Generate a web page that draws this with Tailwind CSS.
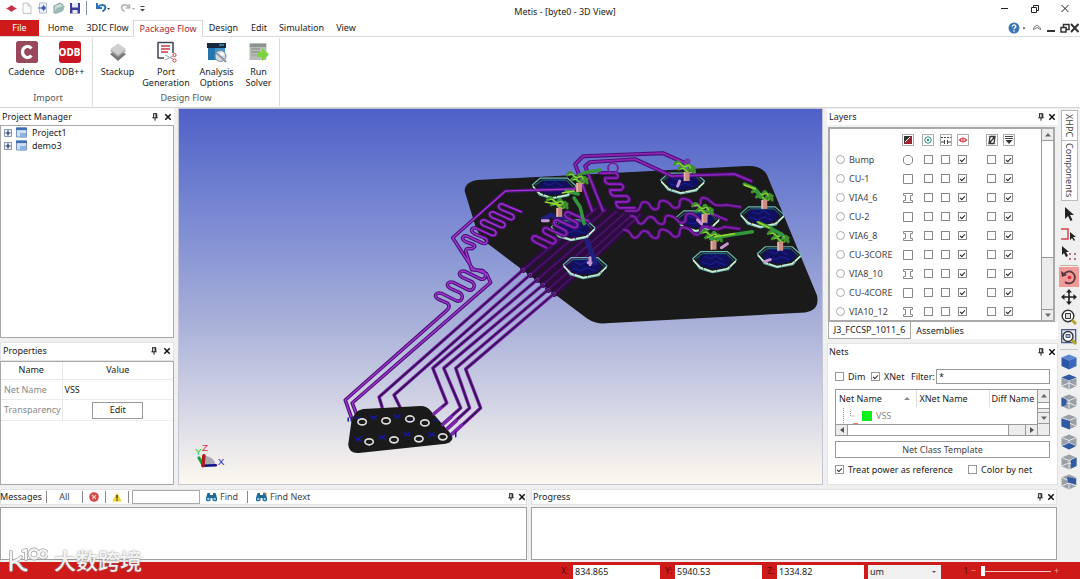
<!DOCTYPE html>
<html lang="en">
  <head>
    <meta charset="UTF-8" />
    <meta name="viewport" content="width=device-width, initial-scale=1.0" />
    <title>Metis - [byte0 - 3D View]</title>
    <script src="https://cdn.jsdelivr.net/npm/@tailwindcss/browser@4"></script>
  </head>
  <body
    class="relative flex min-h-screen flex-col overflow-hidden bg-[#f0f0f0] font-['Noto_Sans','Noto_Sans_CJK_SC',sans-serif] text-[9px] leading-3 text-[#222]"
  >
    <!-- shared icons -->
    <svg class="hidden">
      <symbol id="pin" viewBox="0 0 8 9">
        <path d="M2 .8h4v4.4M2.5.8v4.4M1 5.4h6M4 5.4v3.2M5.2 1v4" fill="none" stroke="#111" stroke-width="1.1" />
      </symbol>
      <symbol id="close" viewBox="0 0 8 8">
        <path d="M1.3 1.3l5.4 5.4M6.7 1.3L1.3 6.7" stroke="#111" stroke-width="1.5" />
      </symbol>
      <symbol id="project" viewBox="0 0 12 12">
        <path d="M.5 1h10v9H.5z" fill="#cfe0f4" stroke="#7b95b8" />
        <path d="M0 .5h11v2.6H0z" fill="#3f6fae" />
        <path d="M4 6h6v4.6H4z" fill="#8db5e4" />
      </symbol>
      <symbol id="plus" viewBox="0 0 8 8">
        <path d="M.5.5h7v7h-7z" fill="#eef2fa" stroke="#8594b0" />
        <path d="M1.5 4h5M4 1.5v5" stroke="#1c2c66" stroke-width="1.2" />
      </symbol>
      <symbol id="binoculars" viewBox="0 0 11 10">
        <path d="M1.5 1h2.5v2h3V1h2.5L11 6v2.5L9 9.5 6.5 8.5V6h-2v2.5L2 9.5 0 8.5V6z" fill="#1c6a96" />
        <circle cx="2.3" cy="7" r="1.2" fill="#9fd0ea" />
        <circle cx="8.7" cy="7" r="1.2" fill="#9fd0ea" />
      </symbol>
      <symbol id="arrow" viewBox="0 0 16 16">
        <path d="M4 1v12l3-3 2.5 5 2-1-2.5-5h4z" fill="#222" />
      </symbol>
      <symbol id="cube" viewBox="0 0 16 16">
        <path d="M8 .5l7.5 3v8.5L8 15.5.5 12V3.5z" fill="#9aa0a8" />
        <path d="M.5 3.5L8 6.5l7.5-3M8 6.5v9M.5 12L8 9l7.5 3" fill="none" stroke="#e6e8ec" />
      </symbol>
    </svg>

    <!-- title bar -->
    <header class="relative flex h-5 items-start justify-between bg-white">
      <div class="flex items-center gap-1 pt-px pl-1.5">
        <svg class="size-[11px]" viewBox="0 0 11 11"><path d="M0 5.5l3-1.5 2.5-2L8 4l3 1.5L8 7 5.5 9 3 7z" fill="#c8324a" /></svg>
        <button aria-label="New"><svg class="size-3" viewBox="0 0 12 12"><path d="M2 1h5l3 3v7.5H2zM7 1v3h3" fill="#fafafa" stroke="#c4c4c4" /></svg></button>
        <button aria-label="Import"><svg class="size-3" viewBox="0 0 12 12"><path d="M2.5 1h7v10h-7z" fill="#eef1fa" stroke="#b4bcd0" /><path d="M6.5 3L9 6 6.5 9 4.5 6z" fill="#3458b4" /><path d="M1 6h5" stroke="#3458b4" /></svg></button>
        <button aria-label="Open"><svg class="size-3" viewBox="0 0 12 12"><path d="M1 4l6-3 3 2v5l-6 3H1z" fill="#c9ddd8" stroke="#7c9a98" /><path d="M1 11l3-5 8-2-3 6z" fill="#98b9b5" /></svg></button>
        <button aria-label="Save"><svg class="size-3" viewBox="0 0 12 12"><path d="M1 1h10v10.5H1z" fill="#3d3f9c" /><path d="M3 1h6v4.5H3zM3.5 8h5v3.5h-5z" fill="#e9e9f8" /></svg></button>
        <span class="mr-1 ml-px h-3.5 w-px bg-[#8896a8]"></span>
        <button aria-label="Undo"><svg class="h-3 w-[15px]" viewBox="0 0 15 12"><path d="M2 1v5h5" fill="none" stroke="#2b72bd" stroke-width="2" /><path d="M2.5 5.500C5 2 10 2 10.500 5.500c0 2-1.500 3-3 4" fill="none" stroke="#2b72bd" stroke-width="2" /><path d="M12 6h3l-1.500 2z" fill="#444" /></svg></button>
        <span class="w-0.5"></span>
        <button aria-label="Redo"><svg class="h-3 w-[15px]" viewBox="0 0 15 12"><path d="M9.500 2v4h-4M9 5.500C7 2 2 2 1.500 5.500c0 2 1.500 3 3 4" fill="none" stroke="#b5b5b5" stroke-width="1.600" /><path d="M12 6h3l-1.500 2z" fill="#aaa" /></svg></button>
        <svg class="h-2 w-[7px]" viewBox="0 0 7 8"><path d="M1.500 2.500h4" stroke="#444" /><path d="M1 5h5L3.500 7.500z" fill="#444" /></svg>
      </div>
      <h1 class="absolute inset-x-0 top-1.5 mr-[-50px] text-center">Metis - [byte0 - 3D View]</h1>
      <div class="relative flex gap-5 pt-1 pr-2.5">
        <button aria-label="Minimize"><svg class="size-2.5" viewBox="0 0 10 10"><path d="M1 4.500h7" stroke="#222" /></svg></button>
        <button aria-label="Restore"><svg class="size-2.5" viewBox="0 0 10 10"><path d="M1.500 3.500h5v5h-5zM3.500 3.500v-2h5v5h-2" fill="none" stroke="#222" /></svg></button>
        <button aria-label="Close"><svg class="size-2.5" viewBox="0 0 10 10"><path d="M1.500 1l7 7M8.500 1l-7 7" stroke="#222" /></svg></button>
      </div>
    </header>

    <!-- ribbon tabs -->
    <nav class="flex h-[17px] items-stretch border-b border-[#d9d9d9] bg-white">
      <a href="#" class="flex w-[39px] items-center justify-center bg-[#cf1a1a] text-white">File</a>
      <a href="#" class="flex w-[43px] items-center justify-center">Home</a>
      <a href="#" class="flex w-[51px] items-center justify-center">3DIC Flow</a>
      <a href="#" class="-mb-px flex w-[70px] items-center justify-center border border-b-0 border-[#d9d9d9] bg-white text-[#a82832]">Package Flow</a>
      <a href="#" class="flex w-[41px] items-center justify-center">Design</a>
      <a href="#" class="flex w-[30px] items-center justify-center">Edit</a>
      <a href="#" class="flex w-[55px] items-center justify-center">Simulation</a>
      <a href="#" class="flex w-[34px] items-center justify-center">View</a>
      <div class="ml-auto flex items-center gap-1">
        <button aria-label="Help"><svg class="h-3 w-[18px]" viewBox="0 0 18 12"><circle cx="6" cy="6" r="5.500" fill="#3b76b5" /><path d="M4.300 4.800c0-2.400 3.500-2.400 3.500-.3C7.800 5.800 6 5.700 6 7.300M6 8.300v1.400" fill="none" stroke="#fff" stroke-width="1.300" /><path d="M14.500 5.500h3L16 7.500z" fill="#444" /></svg></button>
        <button aria-label="Collapse ribbon" class="ml-0.5"><svg class="size-2.5" viewBox="0 0 10 10"><path d="M1.500 5L5 2l3.500 3v1.500L5 4.500 1.500 6.500z" fill="none" stroke="#555" stroke-width=".8" /></svg></button>
        <button aria-label="Minimize view"><svg class="size-2.5" viewBox="0 0 10 10"><path d="M1 8h8" stroke="#333" stroke-width="2" /></svg></button>
        <button aria-label="Restore view"><svg class="size-2.5" viewBox="0 0 10 10"><path d="M1 4.500h5v4.500H1zM3.500 4V1.500h5.500V6.500H6.500" fill="none" stroke="#333" stroke-width="1.500" /></svg></button>
        <button aria-label="Close view" class="-ml-1"><svg class="size-2.5" viewBox="0 0 10 10"><path d="M1 1l7.500 8M8.500 1L1 9" stroke="#333" stroke-width="2" /></svg></button>
      </div>
    </nav>

    <!-- ribbon -->
    <section class="flex h-[71px] border-b border-[#d4d4d4] bg-white leading-[11px]">
      <div class="my-px flex w-[93px] flex-col items-center border-r border-[#dcdcdc] pl-1">
        <div class="flex flex-1 gap-px pt-[3px]">
          <button class="flex w-[42px] flex-col items-center gap-[3px]">
            <svg class="size-[22px]" viewBox="0 0 22 22"><rect width="22" height="22" rx="2.500" fill="#98485a" /><path d="M15.500 7.500C12 3.500 6.500 6 6.500 11s5.500 7.500 9 3.500" fill="none" stroke="#fff" stroke-width="3.200" /></svg>
            Cadence
          </button>
          <button class="flex w-[42px] flex-col items-center gap-[3px]">
            <span class="flex size-[22px] items-center justify-center rounded-[3px] bg-[#cb1523] text-[10px] font-extrabold text-white">ODB</span>
            ODB++
          </button>
        </div>
        <span class="pb-[3px] text-[#555]">Import</span>
      </div>
      <div class="my-px flex w-[187px] flex-col items-center border-r border-[#dcdcdc]">
        <div class="flex flex-1 pt-[3px]">
          <button class="flex w-[44px] flex-col items-center gap-[3px]">
            <svg class="size-[22px]" viewBox="0 0 22 22"><path d="M3 13l8-5 8 5-8 7z" fill="#777" /><path d="M3 10l8-5 8 5-8 6z" fill="#a7a7a7" /><path d="M3 8l8-5.500L19 8l-8 6z" fill="#cfcfcf" /></svg>
            Stackup
          </button>
          <button class="flex w-[53px] flex-col items-center gap-[3px]">
            <svg class="size-[22px]" viewBox="0 0 22 22"><path d="M9 17H3V1.500h15V12" fill="none" stroke="#3d4656" stroke-width="1.500" stroke-linejoin="round" /><path d="M6 5h9M6 8h9M6 11h7" stroke="#c33b49" stroke-width="1.500" /><path d="M10 14l8 4M10 19l8-4" stroke="#9aa4b8" /><circle cx="19.500" cy="14" r="1.600" fill="none" stroke="#dc3d3d" /><circle cx="19.500" cy="19.500" r="1.600" fill="none" stroke="#dc3d3d" /></svg>
            <span>Port<br />Generation</span>
          </button>
          <button class="flex w-[48px] flex-col items-center gap-[3px]">
            <svg class="size-[22px]" viewBox="0 0 22 22"><path d="M1 2h19v5H1z" fill="#17293d" /><path d="M2 7h17v12H2z" fill="#3b95d0" /><path d="M2 7h7v12H2z" fill="#2575ae" /><path d="M13 4h5" stroke="#66c2f0" /><circle cx="14.500" cy="15" r="5.500" fill="#d5dce4" stroke="#7c8794" /><path d="M10 12l5 4 5 5" stroke="#8d99a8" stroke-width="2" fill="none" /><circle cx="16" cy="13" r="2" fill="#f4f6f8" /></svg>
            <span>Analysis<br />Options</span>
          </button>
          <button class="flex w-[36px] flex-col items-center gap-[3px]">
            <svg class="size-[22px]" viewBox="0 0 22 22"><path d="M1.500 2h17v17h-17z" fill="#b7bdb7" /><path d="M2 3h16v3H2z" fill="#8c928c" /><path d="M3 8h9M3 11h9" stroke="#7d857d" /><path d="M3 14h9" stroke="#8ea98e" /><path d="M9 11h5V7l7 6.500L14 20v-4H9z" fill="#7dd33c" /></svg>
            <span>Run<br />Solver</span>
          </button>
        </div>
        <span class="pb-[3px] text-[#555]">Design Flow</span>
      </div>
    </section>

    <div class="flex flex-1">
      <div class="flex min-w-0 flex-1 flex-col">
        <main class="flex flex-1 gap-1">
          <!-- left docks -->
          <aside class="flex w-[174px] flex-col gap-1">
            <section class="flex flex-[1.600] flex-col">
              <header class="flex h-[17px] items-center gap-[5px] bg-white px-0.5">
                <h2 class="flex-1">Project Manager</h2>
                <button aria-label="Pin"><svg class="size-2"><use href="#pin" /></svg></button>
                <button aria-label="Close"><svg class="size-2"><use href="#close" /></svg></button>
              </header>
              <ul class="flex flex-1 flex-col gap-px border border-[#a8a8a8] bg-white px-[3px] py-px">
                <li class="flex items-center gap-1"><svg class="size-2"><use href="#plus" /></svg><svg class="size-3"><use href="#project" /></svg>Project1</li>
                <li class="flex items-center gap-1"><svg class="size-2"><use href="#plus" /></svg><svg class="size-3"><use href="#project" /></svg>demo3</li>
              </ul>
            </section>
            <section class="flex flex-1 flex-col">
              <header class="flex h-[19px] items-center gap-[5px] border border-[#e2e2e2] bg-white px-0.5">
                <h2 class="flex-1">Properties</h2>
                <button aria-label="Pin"><svg class="size-2"><use href="#pin" /></svg></button>
                <button aria-label="Close"><svg class="size-2"><use href="#close" /></svg></button>
              </header>
              <div class="flex-1 border border-[#a8a8a8] bg-white">
                <table class="w-full table-fixed">
                  <thead>
                    <tr class="h-[18px] border-b border-[#e8e8e8]">
                      <th class="w-[61px] border-r border-[#e8e8e8] font-normal">Name</th>
                      <th class="font-normal">Value</th>
                    </tr>
                  </thead>
                  <tbody>
                    <tr class="h-5 border-b border-[#ededed]">
                      <td class="border-r border-[#e8e8e8] pl-[3px] text-[#888]">Net Name</td>
                      <td class="pl-0.5">VSS</td>
                    </tr>
                    <tr class="h-[21px] border-b border-[#ededed]">
                      <td class="border-r border-[#e8e8e8] pl-[3px] text-[#888]">Transparency</td>
                      <td class="text-center"><button class="h-[17px] w-[51px] border border-[#999] align-middle">Edit</button></td>
                    </tr>
                  </tbody>
                </table>
              </div>
            </section>
          </aside>

          <!-- 3D view -->
          <section class="min-w-0 flex-1 border border-[#c4c6d4] bg-linear-to-b from-[#4f60c8] via-[#a5add8] via-55% to-[#fdf8ee]">
            <svg class="size-full" viewBox="177 108 646 376" fill="none" stroke-linejoin="round" stroke-linecap="round">
              <defs>
                <g id="via">
                  <ellipse rx="16" ry="8" cy="-1" fill="#10105e" />
                  <path d="M-22-3L-14-10 13-10 22-2 14 8-2 11-15 7z" stroke="#6cb6b4" stroke-width="1.200" />
                  <path d="M-19-3L-12-8 12-8 19-1" stroke="#1d6f8c" />
                  <path d="M-21-1L-14 6-2 10 13 7 21 0" stroke="#c8f0d8" stroke-width="1.700" stroke-dasharray="8 1 3 2" />
                  <path d="M-10-5l6 2 5-3 7 4M-12 1l8 2 6-3 8 3" stroke="#1c1c8c" stroke-width="1.300" />
                </g>
                <g id="blob">
                  <path d="M-11-4q3-5 6 0t5 1 4 2 5 1M-7 1q4-4 6 0t5-1 5 4" stroke="#3f8f30" stroke-width="3" />
                  <path d="M-9-4q3-2 5 1t5 1 4 2M-5 1q3-2 5 1t6 2" stroke="#8fd838" stroke-width="1.200" />
                  <path d="M1 4v9" stroke="#c98d84" stroke-width="6" stroke-linecap="butt" />
                  <path d="M-1 4v9" stroke="#e8b9ae" stroke-width="1.500" stroke-linecap="butt" />
                </g>
                <path id="long" d="M350 417L344 400 446 310Q450 306 447 303L438 299c-6-3-3-8 3-6l14 7c6 3 9-5 4-8l-9-4c-6-3-3-8 3-6l14 7c6 3 9-5 4-8l-9-4c-6-3-3-8 3-6l14 7c6 3 8-5 3-8L471 269 465 250Q465 247 471 248 476 246 473 244L465 241c-6-3-2-8 3-5l13 6c5 3 8-3 3-5l-10-4c-6-3-2-8 3-5l13 6c5 3 8-3 3-5l-10-4c-6-3-2-8 3-5l13 6c5 3 8-3 3-5l-10-4c-6-3-2-8 3-5l13 6c5 3 8-3 3-5l-10-4c-6-3-2-8 3-5l17 7M356 416L351 403 490 282 486 273 472 268 452 237 505 190 575 188" />
                <path id="bus" d="M381 407L378 397 523 269M399 407L393 395 530 274M433 414L446 403 432 368 537 279M442 424L460 408 443 368 543 284M447 428L469 408 455 368 548 289M452 434L480 408 465 369 554 293" />
                <path id="inner" d="M592 210L575 163 583 155 663 152 688 163M603 210L585 165 590 161 635 158 672 175 735 173 752 180M600 172h15q5 2 2 5h-12q-1 5 4 6h12q5 3 0 6h-11q0 6 5 6h12q5 4 0 6h-11q0 6 5 6h14M546 247l-12-6c-5-3-1-8 3-5l13 6c5 3 8-3 3-5l-8-4c-5-3-1-8 3-5l13 6c5 3 8-3 3-5l-8-4c-5-3-1-8 3-5l13 6c5 3 8-3 3-5l-8-4c-5-3-1-8 3-5l18 8" />
                <path id="meander" d="M626 210h10c6 0 3-9 8-9s5 2 7 5 8 4 8-1 2-6 6-5 5 2 7 5 8 3 8-2 2-6 6-5 5 2 7 5 8 3 8-2 3-5 7-3l6 5c4 3 8 1 13 1l14 2M631 215c8 0 5 8 10 8s5-7 9-7 5 2 7 5 8 4 8-1 2-6 6-5 5 2 7 5 8 3 8-2 2-6 6-5 5 2 7 5 8 3 8-2 4-4 8-2l12 5M624 229c8 0 6 8 11 8s5-7 9-7 5 2 7 5 8 4 8-1 2-6 6-5 5 2 7 5 8 3 8-2 2-6 6-5 5 2 7 5 8 3 8-2 4-5 10-3 9 2 14-1l15 2" />
              </defs>

              <!-- main substrate -->
              <path d="M464 190Q464 181 477 179L747 165Q765 164 769 177L818 295Q821 310 806 312L606 323Q596 324 587 318L486 242Q479 236 475 226Z" fill="#1a1a1a" />
              <path d="M523 269L596 208M530 274L606 209M537 279L616 211M543 284L624 213M548 289L632 214M554 293L640 214" stroke="#2e0b42" stroke-width="6.500" />
              <path d="M523 269L596 208M530 274L606 209M537 279L616 211M543 284L624 213M548 289L632 214M554 293L640 214" stroke="#4c146a" stroke-width="1.500" />

              <use href="#via" x="554" y="187" />
              <use href="#via" x="573" y="229" />
              <use href="#via" x="585" y="267" />
              <use href="#via" x="683" y="182" />
              <use href="#via" x="698" y="220" />
              <use href="#via" x="763" y="216" />
              <use href="#via" x="715" y="261" />
              <use href="#via" x="780" y="256" />
              <path d="M543 218l8-4 8 4 9-2M595 262l-5-14-3-8" stroke="#1f1f80" stroke-width="5" />

              <use href="#long" stroke="#4a1270" stroke-width="3.600" />
              <use href="#long" stroke="#a433d8" stroke-width="1.400" />
              <use href="#bus" stroke="#7c27ac" stroke-width="3.400" />
              <use href="#bus" stroke="#34104f" stroke-width="1.600" />
              <use href="#inner" stroke="#4b0f70" stroke-width="4" />
              <use href="#inner" stroke="#8c24ba" stroke-width="1.800" />
              <use href="#meander" stroke="#4b0f70" stroke-width="3.600" />
              <use href="#meander" stroke="#7f20a8" stroke-width="1.800" />

              <use href="#blob" x="686" y="167" />
              <use href="#blob" x="764" y="195" />
              <use href="#blob" x="713" y="236" />
              <use href="#blob" x="780" y="237" />
              <use href="#blob" x="558" y="203" />
              <use href="#blob" x="704" y="209" />
              <use href="#blob" x="578" y="178" />
              <path d="M711 238l22-4 20-3M745 183l10 4 6 9M760 222l11 5 12 7M574 197l6 9 4 17M583 172l17-3M566 190l12 3" stroke="#34963c" stroke-width="3.500" />
              <path d="M715 236l20-3M745 184l11 4M758 221l12 6M545 201l16 3M562 192l12-2" stroke="#a0d92c" stroke-width="1.500" />
              <circle cx="613" cy="167" r="5" stroke="#76239a" stroke-width="2" />
              <circle cx="688" cy="160" r="3" fill="#6e3ba0" />
              <path d="M590 257v7M542 220h6M588 262h3M765 261l6-2M678 185l2-5M722 247l6-4M698 219l4 4" stroke="#c795cf" stroke-width="3" />

              <!-- die substrate -->
              <path d="M350 423Q352 411 362 409L420 406Q426 406 430 411L451 435Q454 442 445 444L360 453Q348 455 347 445Z" fill="#1a1a1a" />
              <path d="M433 414l7-6M442 425l9-8M447 429l9-8M451 434l10-9" stroke="#7c27ac" stroke-width="3" />
              <g stroke="#1616a0" stroke-width="1.500">
                <path d="M347 418v3M350 418v3M354 418h5M369 416l6 3M370 419l5-3M393 415l6 3M394 418l5-3M405 421h7M433 420l4 1" />
                <path d="M354 438l6 3M355 441l5-4M378 436l6 3M379 439l5-4M403 433l6 3M404 436l5-4M427 433l7 3M428 437l5-4M449 434v3M455 432v5" />
              </g>
              <g stroke="#dcdcd8" stroke-width="1.700">
                <ellipse cx="361" cy="422" rx="4.200" ry="3" />
                <ellipse cx="385" cy="421" rx="4.200" ry="3" />
                <ellipse cx="409" cy="419" rx="4.200" ry="3" />
                <ellipse cx="424" cy="423" rx="4.200" ry="3" />
                <ellipse cx="368" cy="442" rx="4.200" ry="3" />
                <ellipse cx="393" cy="440" rx="4.200" ry="3" />
                <ellipse cx="418" cy="439" rx="4.200" ry="3" />
                <ellipse cx="442" cy="437" rx="4.200" ry="3" />
              </g>

              <!-- axis triad -->
              <path d="M203 456q9 1 11 9l-12 1z" fill="#a9a9b4" />
              <path d="M201 466l13-.5" stroke="#10108a" stroke-width="2.500" />
              <path d="M201 465l-4-7" stroke="#19a03c" stroke-width="3" />
              <path d="M201 466l1-10" stroke="#b01a1a" stroke-width="3.500" />
              <g class="font-['Liberation_Sans',sans-serif] text-[10px]">
                <text x="193" y="455" fill="#20d020">Y</text>
                <text x="200" y="451" fill="#e02a3a">Z</text>
                <text x="216" y="465" fill="#2222c8">X</text>
              </g>
            </svg>
          </section>

          <!-- right docks -->
          <aside class="flex w-[231px] flex-col gap-1 pt-px">
            <section class="flex flex-col">
              <header class="flex h-4 items-center gap-[3px] bg-white px-0.5">
                <h2 class="flex-1">Layers</h2>
                <button aria-label="Pin"><svg class="size-2"><use href="#pin" /></svg></button>
                <button aria-label="Close"><svg class="size-2"><use href="#close" /></svg></button>
              </header>
              <div class="mt-0.5 mr-[3px] ml-px flex h-[195px] border-2 border-[#a9a9a9] bg-white">
                <table class="flex-1 table-fixed self-start">
                  <thead>
                    <tr class="h-[21px]">
                      <th class="w-[67px]"></th>
                      <th class="w-[22px]"><svg class="mx-auto size-3" viewBox="0 0 12 12"><path d="M.5.500h11v11H.5z" fill="#fff" stroke="#aaa" /><path d="M2 2h8v8H2z" fill="#9c2530" /><path d="M2 2h7L2 9z" fill="#333" /><path d="M3 8L8 3" stroke="#fff" /></svg></th>
                      <th class="w-[18px]"><svg class="mx-auto size-3" viewBox="0 0 12 12"><path d="M.5.500h11v11H.5z" fill="#fff" stroke="#aaa" /><circle cx="6" cy="6" r="3.200" fill="none" stroke="#2b8f7e" /><circle cx="6" cy="6" r="1.200" fill="#2b8f7e" /></svg></th>
                      <th class="w-[17px]"><svg class="mx-auto size-3" viewBox="0 0 12 12"><path d="M.5.500h11v11H.5z" fill="#fff" stroke="#aaa" /><path d="M1 3.500h10" stroke="#444" stroke-dasharray="2 1" /><path d="M1 8h3.500M4.500 6v4M7.500 6v4M7.500 8H11" stroke="#444" /></svg></th>
                      <th class="w-[17px]"><svg class="mx-auto size-3" viewBox="0 0 12 12"><path d="M.5.500h11v11H.5z" fill="#fff" stroke="#aaa" /><path d="M1.500 6q4.500-5 9 0q-4.500 5-9 0z" fill="#d8404e" /><path d="M4.500 5v2M6 4.500v3M7.500 5v2" stroke="#fff" stroke-width=".7" /></svg></th>
                      <th class="w-3"></th>
                      <th class="w-[17px]"><svg class="mx-auto size-3" viewBox="0 0 12 12"><path d="M.5.500h11v11H.5z" fill="#fff" stroke="#aaa" /><path d="M4 2.500h5L8 9.500H3zM9 2.500L3 9.500" fill="none" stroke="#333" stroke-width="1.300" /></svg></th>
                      <th class="w-[17px]"><svg class="mx-auto size-3" viewBox="0 0 12 12"><path d="M.5.500h11v11H.5z" fill="#fff" stroke="#aaa" /><path d="M2 2.500h8M2 4.500h8" stroke="#444" /><path d="M2.500 6h7L6 10z" fill="#333" /></svg></th>
                      <th></th>
                    </tr>
                  </thead>
                  <tbody id="layer-rows"></tbody>
                </table>
                <div class="flex w-3 flex-col border-l border-[#999] bg-[#ececec]">
                  <button aria-label="Scroll up" class="flex h-[11px] items-center justify-center"><svg class="h-1 w-1.5" viewBox="0 0 6 4"><path d="M0 3.500L3 0l3 3.500z" fill="#666" /></svg></button>
                  <div class="h-[118px] border-y border-[#999] bg-white"></div>
                  <div class="flex-1"></div>
                  <button aria-label="Scroll down" class="flex h-[11px] items-center justify-center border-t border-[#999]"><svg class="h-1 w-1.5" viewBox="0 0 6 4"><path d="M0 .5h6L3 4z" fill="#666" /></svg></button>
                </div>
              </div>
              <div class="flex h-[17px] bg-white pl-px">
                <button class="w-[83px] border border-t-0 border-[#aaa]">J3_FCCSP_1011_6</button>
                <button class="w-[58px]">Assemblies</button>
              </div>
            </section>

            <section class="flex flex-1 flex-col border border-[#e2e2e2] bg-white">
              <header class="flex h-[15px] items-center gap-[3px] px-px">
                <h2 class="flex-1">Nets</h2>
                <button aria-label="Pin"><svg class="size-2"><use href="#pin" /></svg></button>
                <button aria-label="Close"><svg class="size-2"><use href="#close" /></svg></button>
              </header>
              <div class="flex flex-1 flex-col gap-[5px] px-[7px] pt-2.5">
                <div class="flex h-[15px] items-center">
                  <label class="flex w-9 items-center gap-1"><input type="checkbox" class="grid size-[9px] appearance-none place-items-center border border-[#999]" />Dim</label>
                  <label class="flex w-10 items-center gap-1"><input type="checkbox" checked class="grid size-[9px] appearance-none place-items-center border border-[#999] checked:before:mb-px checked:before:h-[3px] checked:before:w-[5px] checked:before:-rotate-45 checked:before:border-b checked:before:border-l checked:before:border-[#333]" />XNet</label>
                  <label for="filter" class="w-[25px]">Filter:</label>
                  <input id="filter" value="*" class="h-[15px] min-w-0 flex-1 border border-[#999] px-0.5" />
                </div>
                <div class="flex h-[47px] border border-[#999]">
                  <div class="flex min-w-0 flex-1 flex-col">
                    <table class="w-full table-fixed">
                      <thead>
                        <tr class="h-[17px] text-left">
                          <th class="w-20 border-r border-[#ddd] pl-[3px] font-normal"><span class="flex items-center justify-between pr-1.5">Net Name<svg class="h-[3px] w-1.5" viewBox="0 0 6 3"><path d="M0 3l3-3 3 3z" fill="#888" /></svg></span></th>
                          <th class="w-[73px] border-r border-[#ddd] pl-[3px] font-normal">XNet Name</th>
                          <th class="pl-0.5 font-normal whitespace-nowrap">Diff Name</th>
                        </tr>
                      </thead>
                      <tbody>
                        <tr class="h-[17px]">
                          <td colspan="3"><span class="flex items-center gap-1 text-[#888]"><svg class="h-4 w-[22px]" viewBox="0 0 22 16"><path d="M7.500 0v16M14.500 3v5h5" fill="none" stroke="#999" stroke-dasharray="1 1" /><path d="M17 15.500h6" stroke="#e77" /></svg><span class="size-2.5 bg-[#0af01a]"></span>VSS</span></td>
                        </tr>
                      </tbody>
                    </table>
                    <div class="flex h-[11px] border-t border-[#999] bg-[#ececec]">
                      <button aria-label="Scroll left" class="flex w-3 items-center justify-center border-r border-[#999]"><svg class="h-1.5 w-1" viewBox="0 0 4 6"><path d="M4 0v6L0 3z" fill="#555" /></svg></button>
                      <div class="flex-1 border-r border-[#999] bg-white"></div>
                      <div class="w-4"></div>
                      <button aria-label="Scroll right" class="flex w-3 items-center justify-center border-l border-[#999]"><svg class="h-1.5 w-1" viewBox="0 0 4 6"><path d="M0 0v6l4-3z" fill="#555" /></svg></button>
                    </div>
                  </div>
                  <div class="flex w-3 flex-col border-l border-[#999] bg-[#ececec]">
                    <button aria-label="Scroll up" class="flex h-3 items-center justify-center"><svg class="h-1 w-1.5" viewBox="0 0 6 4"><path d="M0 3.500L3 0l3 3.500z" fill="#666" /></svg></button>
                    <div class="h-[7px] border-y border-[#999] bg-white"></div>
                    <div class="h-[3px]"></div>
                    <button aria-label="Scroll down" class="flex h-3 items-center justify-center border-y border-[#999]"><svg class="h-1 w-1.5" viewBox="0 0 6 4"><path d="M0 .5h6L3 4z" fill="#666" /></svg></button>
                  </div>
                </div>
                <button class="h-[17px] border border-[#999] text-[#444]">Net Class Template</button>
                <div class="flex h-[13px] items-center">
                  <label class="flex w-[133px] items-center gap-1"><input type="checkbox" checked class="grid size-[9px] appearance-none place-items-center border border-[#999] checked:before:mb-px checked:before:h-[3px] checked:before:w-[5px] checked:before:-rotate-45 checked:before:border-b checked:before:border-l checked:before:border-[#333]" />Treat power as reference</label>
                  <label class="flex items-center gap-1"><input type="checkbox" class="grid size-[9px] appearance-none place-items-center border border-[#999]" />Color by net</label>
                </div>
              </div>
            </section>
          </aside>
        </main>

        <!-- bottom docks -->
        <div class="flex h-[77px] gap-1 pt-1">
          <section class="flex w-[527px] flex-col gap-0.5">
            <header class="flex h-4 items-center border border-[#e2e2e2] bg-white">
              <h2 class="-ml-px w-[46px]">Messages</h2>
              <button class="h-3 w-9 border-l border-[#888] text-[#444]">All</button>
              <button aria-label="Errors" class="flex h-3 w-[23px] items-center justify-center border-l border-[#888]"><svg class="size-2.5" viewBox="0 0 10 10"><circle cx="5" cy="5" r="4.800" fill="#d8453e" /><path d="M3 3l4 4M7 3L3 7" stroke="#f6c8c4" stroke-width="1.300" /></svg></button>
              <button aria-label="Warnings" class="flex h-3 w-6 items-center justify-center border-x border-[#888]"><svg class="size-2.5" viewBox="0 0 10 10"><path d="M5 .5L9.800 9.500H.2z" fill="#f2d42c" /><path d="M5 3v3.500M5 7.500v1.200" stroke="#222" stroke-width="1.300" /></svg></button>
              <input aria-label="Search messages" class="ml-[3px] h-3.5 w-[68px] border border-[#aaa]" />
              <button class="ml-1.5 flex h-3 w-[42px] items-center gap-[3px] border-r border-[#888] text-[#444]"><svg class="h-2.5 w-[11px]"><use href="#binoculars" /></svg>Find</button>
              <button class="ml-2 flex items-center gap-[3px] text-[#444]"><svg class="h-2.5 w-[11px]" viewBox="0 0 11 10"><use href="#binoculars" /><path d="M7 1h3v3" fill="none" stroke="#e08a3c" /></svg>Find Next</button>
              <button aria-label="Pin" class="mr-[3px] ml-auto"><svg class="size-2"><use href="#pin" /></svg></button>
              <button aria-label="Close"><svg class="size-2"><use href="#close" /></svg></button>
            </header>
            <div class="mb-0.5 flex-1 border border-[#a0a0a0] bg-white"></div>
          </section>
          <section class="flex min-w-0 flex-1 flex-col gap-0.5 pr-px">
            <header class="flex h-4 items-center gap-[3px] border border-[#e2e2e2] bg-white px-px">
              <h2 class="flex-1">Progress</h2>
              <button aria-label="Pin"><svg class="size-2"><use href="#pin" /></svg></button>
              <button aria-label="Close"><svg class="size-2"><use href="#close" /></svg></button>
            </header>
            <div class="mb-0.5 flex-1 border border-[#a0a0a0] bg-white"></div>
          </section>
        </div>
      </div>

      <!-- view toolbar -->
      <aside class="flex w-[22px] flex-col items-center pt-0.5">
        <button class="flex h-[31px] w-[17px] items-center justify-center border border-[#bbb] bg-white text-[#444] [writing-mode:vertical-rl]">XHPC</button>
        <button class="flex h-[60px] w-[17px] items-center justify-center border border-t-0 border-[#bbb] bg-white text-[#444] [writing-mode:vertical-rl]">Components</button>
        <div class="mt-[5px] flex flex-col items-center gap-1">
          <button aria-label="Select"><svg class="size-4"><use href="#arrow" /></svg></button>
          <button aria-label="Select net"><svg class="size-4" viewBox="0 0 16 16"><path d="M0 3h7v10H0" fill="none" stroke="#d8404a" stroke-width="1.500" /><path d="M9 6v8l2-2 2 3 1-1-2-3h3z" fill="#222" /></svg></button>
          <button aria-label="Select area"><svg class="size-4" viewBox="0 0 16 16"><path d="M1 0v9l2-2 2 4 2-1-2-4h3z" fill="#222" /><path d="M8 8h2M13 8h2M8 13h2M13 13h2" stroke="#b4444a" stroke-width="1.500" /></svg></button>
        </div>
        <span class="mt-[3px] mb-px h-px w-[18px] bg-[#c9b0a0]"></span>
        <button aria-label="Rotate" class="flex h-5 w-5 items-center justify-center bg-[#f09a9a]"><svg class="size-4" viewBox="0 0 16 16"><path d="M3 5a6 6 0 1 1 1 8" fill="none" stroke="#57363c" stroke-width="1.800" /><path d="M0 2l1 6 5-2z" fill="#57363c" /><circle cx="8.500" cy="8.500" r="1.800" fill="#d42a35" /></svg></button>
        <div class="mt-0.5 flex flex-col items-center gap-1">
          <button aria-label="Pan"><svg class="size-4" viewBox="0 0 16 16"><path d="M8 2v12M2 8h12" stroke="#222" stroke-width="1.600" /><path d="M8 0l3 3.500H5zM8 16l3-3.500H5zM0 8l3.500-3v6zM16 8l-3.500-3v6z" fill="#222" /></svg></button>
          <button aria-label="Zoom fit"><svg class="size-4" viewBox="0 0 16 16"><circle cx="7" cy="7" r="5.800" fill="#fff" stroke="#333" stroke-width="1.400" /><path d="M4.500 4.500h5v5h-5z" fill="#ddd" stroke="#333" /><path d="M11 11l4 4" stroke="#b5a62a" stroke-width="3" /></svg></button>
          <button aria-label="Zoom area"><svg class="size-4" viewBox="0 0 16 16"><path d="M.7.700h14v13H.7z" fill="#dfe6f4" stroke="#4a5a86" stroke-width="1.300" /><circle cx="7" cy="7.500" r="5" fill="#fff" stroke="#333" stroke-width="1.400" /><path d="M5 5.500h4v3H5z" fill="#9fb2dc" stroke="#4a5a86" /><path d="M11 11l4 4" stroke="#b5a62a" stroke-width="3" /></svg></button>
        </div>
        <span class="my-1 h-px w-[18px] bg-[#c4c4c4]"></span>
        <div class="flex flex-col items-center gap-1">
          <button aria-label="Isometric view"><svg class="size-4" viewBox="0 0 16 16"><path d="M8 .5l7.500 3L8 6.500.5 3.500z" fill="#5c86d4" /><path d="M.5 3.500L8 6.500v9L.5 12z" fill="#2c56a8" /><path d="M15.500 3.500L8 6.500v9l7.500-3.500z" fill="#3a68bc" /></svg></button>
          <button aria-label="Top view"><svg class="size-4" viewBox="0 0 16 16"><use href="#cube" /><path d="M8 .5l7.500 3L8 6.500.5 3.500z" fill="#2f5aa4" /></svg></button>
          <button aria-label="Left view"><svg class="size-4" viewBox="0 0 16 16"><use href="#cube" /><path d="M.5 3.500l5 2v5.500l-5 1.500z" fill="#2f5aa4" /></svg></button>
          <button aria-label="Front view"><svg class="size-4" viewBox="0 0 16 16"><use href="#cube" /><path d="M.5 4.500L9 7v8.500L.5 12.500z" fill="#2f5aa4" /></svg></button>
          <button aria-label="Bottom view"><svg class="size-4" viewBox="0 0 16 16"><use href="#cube" /><path d="M1 12l7-3 7 3-7 3.500z" fill="#2f5aa4" /></svg></button>
          <button aria-label="Right view"><svg class="size-4" viewBox="0 0 16 16"><use href="#cube" /><path d="M15.500 3.500L10 6v8.500l5.500-2.500z" fill="#2f5aa4" /></svg></button>
          <button aria-label="Back view"><svg class="size-4" viewBox="0 0 16 16"><use href="#cube" /><path d="M6 3l9 1.500v6L7 8.500z" fill="#2f5aa4" /></svg></button>
        </div>
      </aside>
    </div>

    <!-- status bar -->
    <footer class="flex h-[17px] items-stretch justify-end bg-[#cf1a1a] pt-[3px] text-[#222]">
      <label for="pos-x" class="w-3 text-[#5a0a0a]">X:</label>
      <input id="pos-x" value="834.865" class="mr-[5px] w-[87px] bg-white px-0.5" />
      <label for="pos-y" class="w-2.5 text-[#5a0a0a]">Y:</label>
      <input id="pos-y" value="5940.53" class="mr-[5px] w-[87px] bg-white px-0.5" />
      <label for="pos-z" class="w-2.5 text-[#5a0a0a]">Z:</label>
      <input id="pos-z" value="1334.82" class="mr-1 w-[87px] bg-white px-0.5" />
      <span class="flex w-[73px] items-center bg-[#f0f0f0] pr-1">
        <select aria-label="Units" class="flex-1 appearance-none px-0.5"><option>um</option></select>
        <svg class="h-1 w-1.5" viewBox="0 0 6 4"><path d="M1 1h4L3 3z" fill="#555" /></svg>
      </span>
      <label for="scale" class="w-10 pr-[5px] text-right text-[#5a0a0a]">1 <span class="text-[#e8a070]">−</span></label>
      <input
        id="scale"
        type="range"
        value="0"
        class="my-px h-2.5 w-[70px] appearance-none bg-[linear-gradient(#f6caca,#f6caca)] bg-[length:100%_1px] bg-center bg-no-repeat [&::-webkit-slider-thumb]:h-2.5 [&::-webkit-slider-thumb]:w-1 [&::-webkit-slider-thumb]:appearance-none [&::-webkit-slider-thumb]:bg-white"
      />
      <span class="w-[29px] pl-[3px] text-[#f0a0a0]">+</span>
    </footer>

    <!-- watermark -->
    <div class="pointer-events-none absolute bottom-1 left-2 flex items-center gap-1.5 text-[22px] leading-[30px] font-medium text-white/90 text-shadow-[0_0_2px_#777]">
      <svg class="h-[26px] w-[40px]" viewBox="0 0 40 26" fill="none" stroke-linecap="round" stroke-linejoin="round">
        <defs>
          <path id="mark" d="M3 5v18M3 18c0-5 8-4 10-8M6 15c6-1 5 8 12 8M15 4l3-1v9" />
          <g id="loops"><circle cx="26" cy="7" r="4.500" /><circle cx="35" cy="7" r="3.800" /></g>
        </defs>
        <g stroke="#a0a0a0" stroke-width="3.800"><use href="#mark" /><use href="#loops" /></g>
        <g stroke="#f4f4f4" stroke-width="2.400"><use href="#mark" /><use href="#loops" /></g>
      </svg>
      <span lang="zh">大数跨境</span>
    </div>

    <script>
      const layers = ["Bump", "CU-1", "VIA4_6", "CU-2", "VIA6_8", "CU-3CORE", "VIA8_10", "CU-4CORE", "VIA10_12"];

      // outline drawn in the shape column
      function shapeIcon(name) {
        if (name === "Bump") return "M3 .5h4L9.500 3v4L7 9.500H3L.5 7V3z";
        if (name.startsWith("VIA")) return "M.5.500h9v2h-2v5h2v2h-9v-2h2v-5h-2z";
        return "M.5.500h9v9h-9z";
      }

      function box(label, checked) {
        return `<td><input type="checkbox" aria-label="${label}" ${checked ? "checked" : ""} class="mx-auto grid size-[9px] appearance-none place-items-center border border-[#888] checked:before:mb-px checked:before:h-[3px] checked:before:w-[5px] checked:before:-rotate-45 checked:before:border-b checked:before:border-l checked:before:border-[#222]" /></td>`;
      }

      document.getElementById("layer-rows").innerHTML = layers
        .map(
          (name) => `
          <tr class="h-[19px]">
            <td class="pl-1.5"><label class="flex items-center gap-1 text-[#444]"><input type="radio" name="layer" class="size-[9px] appearance-none rounded-full border border-[#aaa]" />${name}</label></td>
            <td><svg class="mx-auto size-2.5" viewBox="0 0 10 10"><path d="${shapeIcon(name)}" fill="none" stroke="#888" /></svg></td>
            ${box(name + " vias", false)}
            ${box(name + " gaps", false)}
            ${box(name + " visible", true)}
            <td></td>
            ${box(name + " shapes", false)}
            ${box(name + " filled", true)}
            <td></td>
          </tr>`
        )
        .join("");
    </script>
  </body>
</html>
